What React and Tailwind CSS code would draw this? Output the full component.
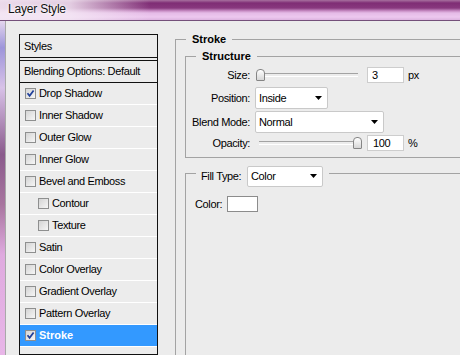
import React from "react";

const FONT = "[font-family:'Liberation_Sans',Arial,sans-serif]";

function Check() {
  return (
    <svg width="9" height="9" viewBox="0 0 9 9" className="block">
      <path d="M1.5 4.2 L3.6 6.8 L7.6 1.4" fill="none" stroke="#1f3f9a" strokeWidth="1.7" />
    </svg>
  );
}

function Box({ checked }) {
  return (
    <span className="inline-flex items-center justify-center w-[11px] h-[11px] shrink-0 border border-[#8e8f8f] bg-[linear-gradient(135deg,#d4d4d4,#f6f6f6)]">
      {checked && <Check />}
    </span>
  );
}

function Arrow() {
  return (
    <svg width="7" height="4" viewBox="0 0 7 4" className="block shrink-0">
      <path d="M0 0 H7 L3.5 4 Z" fill="#000" />
    </svg>
  );
}

function Dropdown({ value, className }) {
  return (
    <div
      className={
        "flex items-center justify-between bg-white border border-[#c9c9c9] rounded-[2px] pl-[3px] pr-[5px] " +
        className
      }
    >
      <span>{value}</span>
      <Arrow />
    </div>
  );
}

function Thumb() {
  return (
    <span className="block w-[9px] h-[12px] rounded-t-[4px] rounded-b-[1px] border border-[#858585] bg-[linear-gradient(to_bottom,#ffffff,#d6d6d6)]" />
  );
}

const items = [
  { label: "Drop Shadow", checked: true },
  { label: "Inner Shadow" },
  { label: "Outer Glow" },
  { label: "Inner Glow" },
  { label: "Bevel and Emboss" },
  { label: "Contour", indent: true },
  { label: "Texture", indent: true },
  { label: "Satin" },
  { label: "Color Overlay" },
  { label: "Gradient Overlay" },
  { label: "Pattern Overlay" },
];

export default function App() {
  return (
    <div
      className={
        "w-[460px] h-[355px] overflow-hidden flex flex-col bg-[#ececec] text-[11px] tracking-[-0.35px] text-black " +
        FONT
      }
    >
      {/* Title bar */}
      <div className="h-[21px] shrink-0 border-b border-[#74507a] flex items-center pl-[8px] bg-[linear-gradient(to_right,rgba(244,232,244,0.92)_0px,rgba(244,232,244,0.85)_70px,rgba(244,232,244,0)_150px),linear-gradient(to_bottom,#a7709f_0px,#7f2d75_3px,#88387e_8px,#c98fc6_11px,#e5bbe7_13px,#edc8ef_17px,#dcb2df_20px)]">
        <span className="text-[12px] tracking-[-0.2px] leading-[16px] -mt-[3px] text-[#111] [text-shadow:0_0_4px_#fff,0_0_2px_#fff]">
          Layer Style
        </span>
      </div>

      {/* Body */}
      <div className="flex flex-1 min-h-0">
        {/* window frame strip */}
        <div className="w-[6px] shrink-0 border-r border-[#a9a9a9] bg-[linear-gradient(to_bottom,#e4d6ee_0%,#9d95da_8%,#d8c2e8_20%,#8a5a8c_40%,#a8759f_55%,#dfaadf_70%,#e8b6e8_100%)]" />

        {/* Styles list */}
        <div className="ml-[13px] mt-[13px] w-[139px] shrink-0 border border-[#111] flex flex-col">
          <div className="h-[23px] shrink-0 border-b border-[#111] flex items-center pl-[4px]">Styles</div>
          <div className="h-[2px] shrink-0" />
          <div className="h-[23px] shrink-0 border-t border-b border-[#111] flex items-center pl-[4px]">
            Blending Options: Default
          </div>
          {items.map((it) => (
            <div
              key={it.label}
              className={
                "h-[22px] shrink-0 border-b border-white flex items-center gap-[3px] " +
                (it.indent ? "pl-[18px]" : "pl-[5px]")
              }
            >
              <Box checked={it.checked} />
              <span>{it.label}</span>
            </div>
          ))}
          <div className="h-[22px] shrink-0 bg-[#3399ff] text-white font-bold tracking-[0px] flex items-center gap-[3px] pl-[5px] border-b border-white">
            <Box checked />
            <span>Stroke</span>
          </div>
        </div>

        {/* Right side */}
        <div className="ml-[17px] mt-[11px] flex-1 flex flex-col">
          {/* Stroke group header */}
          <div className="flex h-[14px] shrink-0">
            <div className="w-[11px] h-[7px] self-end border-l border-t border-[#a3a3a3]" />
            <span className="px-[6px] font-bold tracking-[0px] leading-[14px]">Stroke</span>
            <div className="flex-1 h-[7px] self-end border-t border-[#a3a3a3]" />
          </div>
          <div className="flex-1 border-l border-[#a3a3a3] pl-[9px] pt-[3px] flex flex-col">
            {/* Structure header */}
            <div className="flex h-[14px] shrink-0">
              <div className="w-[11px] h-[7px] self-end border-l border-t border-[#a3a3a3]" />
              <span className="px-[6px] font-bold tracking-[0px] leading-[14px]">Structure</span>
              <div className="flex-1 h-[7px] self-end border-t border-[#a3a3a3]" />
            </div>
            <div className="border-l border-b border-[#a3a3a3] pb-[6px] flex flex-col">
              {/* Size */}
              <div className="mt-[4px] h-[16px] flex items-center">
                <span className="w-[64px] text-right">Size:</span>
                <div className="relative ml-[5px] w-[108px] h-[16px] flex items-center">
                  <div className="ml-[4px] w-[99px] h-[2px] border-t border-[#a3a3a3] border-b border-b-white box-content" />
                  <div className="absolute left-[1px] top-[2px]">
                    <Thumb />
                  </div>
                </div>
                <div className="ml-[4px] w-[37px] h-[16px] bg-white border border-[#cdcdcd] pl-[4px] flex items-center">3</div>
                <span className="ml-[4px]">px</span>
              </div>
              {/* Position */}
              <div className="mt-[4px] h-[22px] flex items-center">
                <span className="w-[64px] text-right">Position:</span>
                <Dropdown value="Inside" className="ml-[5px] w-[73px] h-[22px]" />
              </div>
              {/* Blend Mode */}
              <div className="mt-[2px] h-[22px] flex items-center">
                <span className="w-[64px] text-right">Blend Mode:</span>
                <Dropdown value="Normal" className="ml-[5px] w-[129px] h-[22px]" />
              </div>
              {/* Opacity */}
              <div className="mt-[2px] h-[16px] flex items-center">
                <span className="w-[64px] text-right">Opacity:</span>
                <div className="relative ml-[5px] w-[108px] h-[16px] flex items-center">
                  <div className="ml-[4px] w-[99px] h-[2px] border-t border-[#a3a3a3] border-b border-b-white box-content" />
                  <div className="absolute left-[98px] top-[2px]">
                    <Thumb />
                  </div>
                </div>
                <div className="ml-[4px] w-[37px] h-[16px] bg-white border border-[#cdcdcd] pl-[5px] flex items-center">100</div>
                <span className="ml-[4px]">%</span>
              </div>
            </div>

            {/* Fill Type group */}
            <div className="mt-[7px] flex h-[22px] shrink-0">
              <div className="w-[11px] h-[14px] self-end border-l border-t border-[#a3a3a3]" />
              <div className="flex items-center pl-[5px] pr-[6px]">
                <span className="w-[46px]">Fill Type:</span>
                <Dropdown value="Color" className="w-[76px] h-[21px]" />
              </div>
              <div className="flex-1 h-[14px] self-end border-t border-[#a3a3a3]" />
            </div>
            <div className="flex-1 border-l border-[#a3a3a3] pl-[9px] pt-[9px]">
              <div className="h-[16px] flex items-center">
                <span className="w-[32px]">Color:</span>
                <div className="w-[31px] h-[16px] bg-white border border-[#8c8c8c]" />
              </div>
            </div>
          </div>
        </div>
      </div>
    </div>
  );
}
